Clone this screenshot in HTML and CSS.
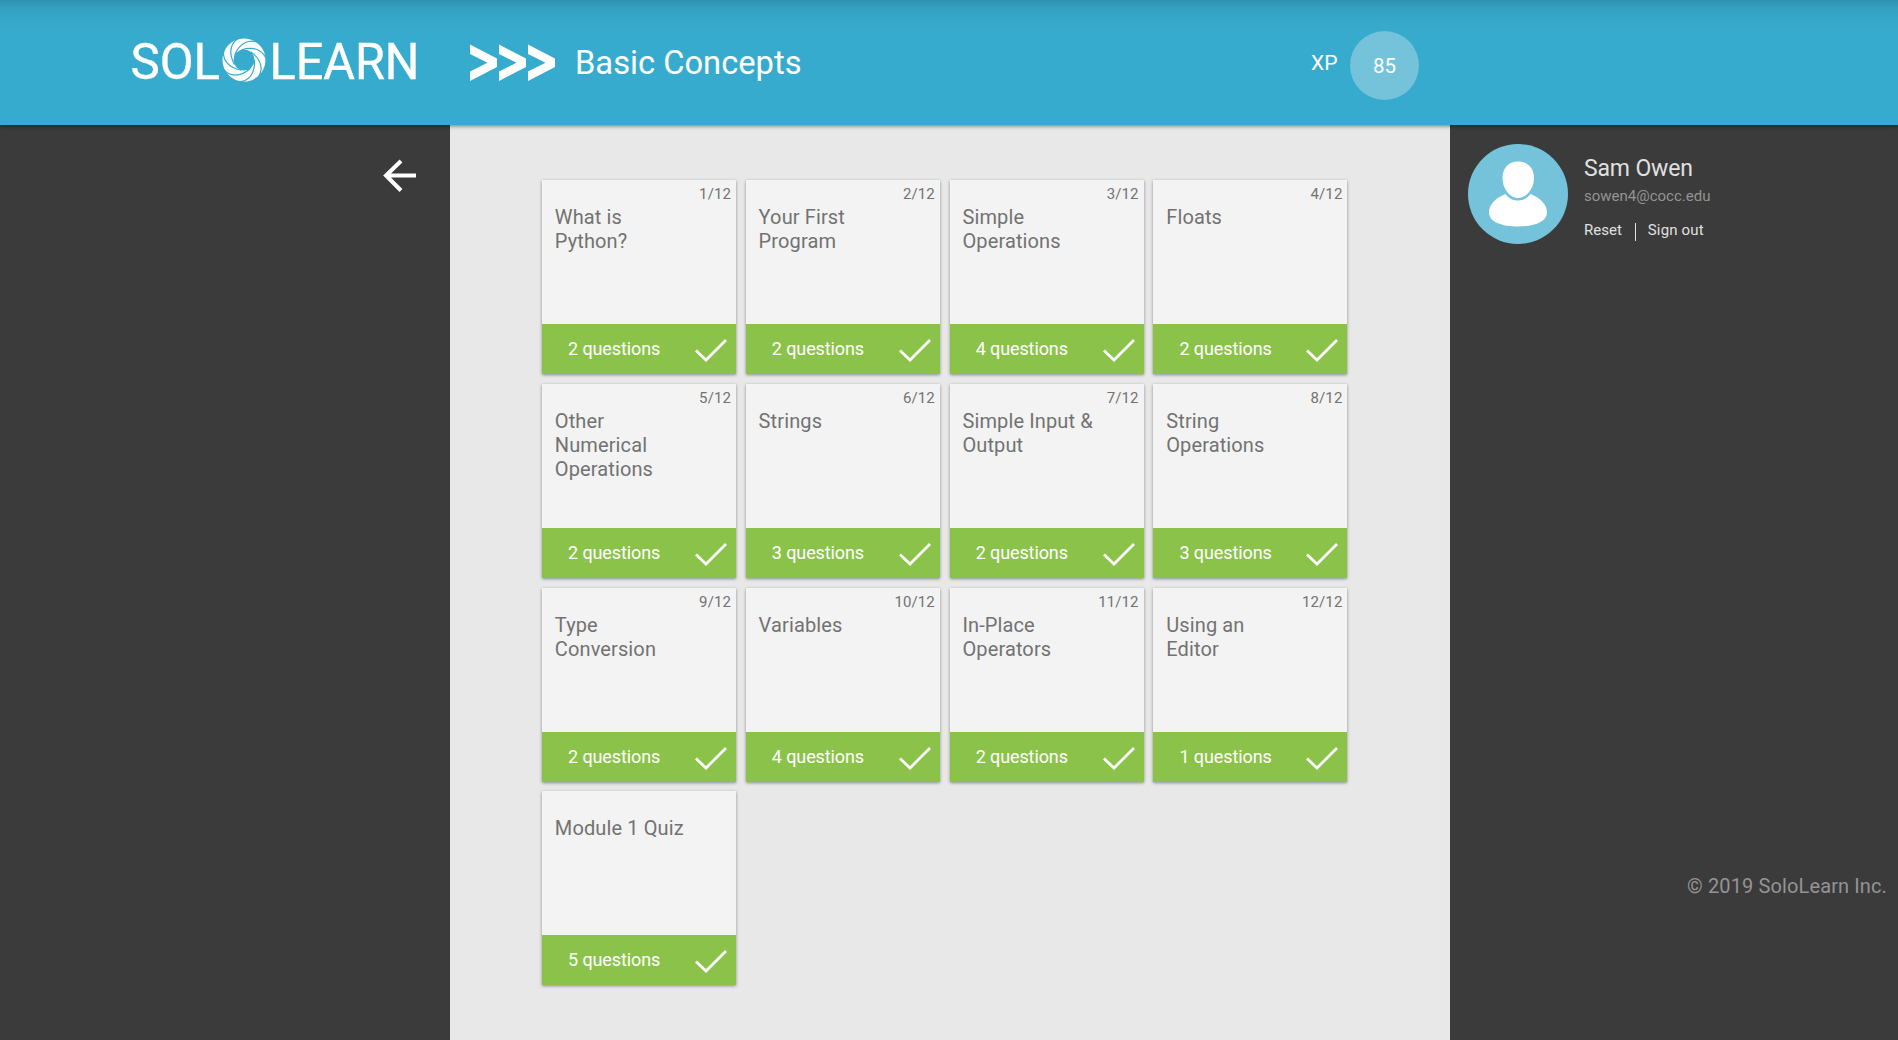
FILE: index.html
```html
<!DOCTYPE html>
<html lang="en">
<head>
<meta charset="utf-8">
<title>Basic Concepts</title>
<link rel="stylesheet" href="styles.css">
</head>
<body>
<svg class="defs" width="0" height="0">
  <symbol id="check" viewBox="0 0 34 26"><path d="M2 13.5 12 23 32 3"/></symbol>
</svg>
<header class="header">
  <svg class="logo" width="320" height="60" viewBox="0 0 320 60">
    <text x="20.500" y="48.700" textLength="89.500" lengthAdjust="spacingAndGlyphs">SOL</text>
    <text x="159.500" y="48.700" textLength="150" lengthAdjust="spacingAndGlyphs">LEARN</text>
    <g transform="translate(134 30)">
      <circle class="ring" r="16"/>
      <g class="blades">
        <path id="blade" d="M-4 -22.500C-13 -18-16.500 -8-9.500 4.500"/>
        <use href="#blade" transform="rotate(51.430)"/>
        <use href="#blade" transform="rotate(102.860)"/>
        <use href="#blade" transform="rotate(154.290)"/>
        <use href="#blade" transform="rotate(205.710)"/>
        <use href="#blade" transform="rotate(257.140)"/>
        <use href="#blade" transform="rotate(308.570)"/>
      </g>
    </g>
  </svg>
  <svg class="chevrons" width="87" height="38" viewBox="0 0 87 38">
    <path id="chev" d="M0 .5 27 14.500V23L0 37V27.500L17.500 18.700 0 10Z"/>
    <use href="#chev" x="29"/>
    <use href="#chev" x="58"/>
  </svg>
  <h1 class="title">Basic Concepts</h1>
  <div class="xp"><span class="xp-label">XP</span><span class="xp-value">85</span></div>
</header>
<div class="layout">
  <aside class="side-left">
    <svg width="34" height="34" viewBox="0 0 34 34"><path d="M33 16.500H4M18 2 3 16.500 18 31.500"/></svg>
  </aside>
  <main class="main">
    <div class="grid">
      <article class="card"><span class="count">1/12</span><h2>What is Python?</h2><footer>2 questions<svg><use href="#check"/></svg></footer></article>
      <article class="card"><span class="count">2/12</span><h2>Your First Program</h2><footer>2 questions<svg><use href="#check"/></svg></footer></article>
      <article class="card"><span class="count">3/12</span><h2>Simple Operations</h2><footer>4 questions<svg><use href="#check"/></svg></footer></article>
      <article class="card"><span class="count">4/12</span><h2>Floats</h2><footer>2 questions<svg><use href="#check"/></svg></footer></article>
      <article class="card"><span class="count">5/12</span><h2>Other Numerical Operations</h2><footer>2 questions<svg><use href="#check"/></svg></footer></article>
      <article class="card"><span class="count">6/12</span><h2>Strings</h2><footer>3 questions<svg><use href="#check"/></svg></footer></article>
      <article class="card"><span class="count">7/12</span><h2>Simple Input &amp; Output</h2><footer>2 questions<svg><use href="#check"/></svg></footer></article>
      <article class="card"><span class="count">8/12</span><h2>String Operations</h2><footer>3 questions<svg><use href="#check"/></svg></footer></article>
      <article class="card"><span class="count">9/12</span><h2>Type Conversion</h2><footer>2 questions<svg><use href="#check"/></svg></footer></article>
      <article class="card"><span class="count">10/12</span><h2>Variables</h2><footer>4 questions<svg><use href="#check"/></svg></footer></article>
      <article class="card"><span class="count">11/12</span><h2>In-Place Operators</h2><footer>2 questions<svg><use href="#check"/></svg></footer></article>
      <article class="card"><span class="count">12/12</span><h2>Using an<br>Editor</h2><footer>1 questions<svg><use href="#check"/></svg></footer></article>
      <article class="card"><span class="count"></span><h2>Module 1 Quiz</h2><footer>5 questions<svg><use href="#check"/></svg></footer></article>
    </div>
  </main>
  <aside class="side-right">
    <section class="profile">
      <svg class="avatar" width="100" height="100" viewBox="0 0 100 100">
        <circle cx="50" cy="50" r="50"/>
        <path d="M37.500 50C27 54 21 61 21 68.500 21 78 34 82.500 50 82.500S79 78 79 68.500C79 61 73 54 62.500 50 59 54.500 55 56.500 50 56.500S41 54.500 37.500 50Z"/>
        <path d="M50 17.500C59.500 17.500 66 24 66 34 66 43.500 59 54 50 54S34.500 43.500 34.500 34C34.500 24 40.500 17.500 50 17.500Z"/>
      </svg>
      <div class="info">
        <div class="name">Sam Owen</div>
        <div class="email">sowen4@cocc.edu</div>
        <nav class="links"><a>Reset</a><a>Sign out</a></nav>
      </div>
    </section>
    <p class="copyright">© 2019 SoloLearn Inc.</p>
  </aside>
</div>
</body>
</html>
```
FILE: styles.css
```css
* { box-sizing: border-box; }
body { margin: 0; height: 1040px; overflow: hidden; font-family: Roboto, sans-serif; background: #3b3b3b; display: flex; flex-direction: column; }
h1, h2, p { margin: 0; font-weight: 400; }
.defs { position: absolute; }

.header {
  height: 125px; flex: none; display: flex; align-items: flex-start; padding-left: 110px;
  color: #fff; background: linear-gradient(rgba(0,0,0,.14), rgba(0,0,0,.06) 9px, rgba(0,0,0,.02) 20px, transparent 30px) #37abcd;
  box-shadow: 0 1px 4px rgba(0,0,0,.5); z-index: 1;
}
.logo { margin-top: 30px; flex: none; font-size: 49.5px; fill: #fff; overflow: visible; }
.logo text { stroke: #fff; stroke-width: .4; }
.ring { fill: none; stroke: #fff; stroke-width: 11; }
.blades { fill: none; stroke: #37abcd; stroke-width: 1.2; }
.chevrons { margin: 43.500px 0 0 40px; flex: none; fill: #fff; }
.title { margin: 44px 0 0 18px; width: 400px; font-size: 32.7px; line-height: 38px; }
.xp { display: flex; margin: 31px 0 0 336px; }
.xp-label { width: 39px; padding-top: 20px; font-size: 21px; line-height: 25px; }
.xp-value { width: 69px; height: 69px; border-radius: 50%; background: #74c3da; text-align: center; line-height: 71px; font-size: 20.5px; }

.layout { flex: 1; display: grid; grid-template-columns: 450px 1000px 448px; }
.side-left { display: flex; align-items: flex-start; justify-content: flex-end; padding: 34px 33px 0 0; }
.side-left path { fill: none; stroke: #fff; stroke-width: 4; }
.main { background: #e8e8e8; padding: 55px 0 0 92px; }
.grid { display: grid; grid-template-columns: repeat(4, 194px); grid-auto-rows: 194px; gap: 9.820px; }
.card { display: flex; flex-direction: column; background: #f3f3f3; box-shadow: 0 1px 3px rgba(0,0,0,.4); }
.count { height: 24px; padding: 5px 5px 0 0; text-align: right; font-size: 15px; line-height: 18px; color: #727272; letter-spacing: .1px; }
.card h2 { flex: 1; padding: 1px 40px 0 12.800px; font-size: 20px; line-height: 24px; color: #727272; letter-spacing: .12px; }
.card footer { height: 50px; display: flex; align-items: center; justify-content: space-between; padding: 0 8px 1px 26px; background: #8bc34a; color: #fff; font-size: 18px; letter-spacing: -.1px; }
.card footer svg { width: 34px; height: 26px; margin-top: 3px; fill: none; stroke: #fff; stroke-width: 2.7; }

.side-right { padding: 19px 11px 0 18px; }
.profile { display: flex; }
.avatar { fill: #fff; }
.avatar circle { fill: #74c3da; }
.info { padding: 10px 0 0 16px; }
.name { font-size: 23px; line-height: 30px; color: #e0e0e0; letter-spacing: -.15px; }
.email { font-size: 15px; line-height: 24px; color: #949494; }
.links { display: flex; margin-top: 10px; font-size: 15px; line-height: 24px; color: #e0e0e0; }
.links a + a { margin-left: 13px; padding-left: 13px; background: linear-gradient(#e0e0e0, #e0e0e0) 0 5px / 1px 18px no-repeat; letter-spacing: .15px; }
.copyright { margin-top: 630px; text-align: right; font-size: 20px; line-height: 24px; color: #949494; letter-spacing: .12px; }
```
